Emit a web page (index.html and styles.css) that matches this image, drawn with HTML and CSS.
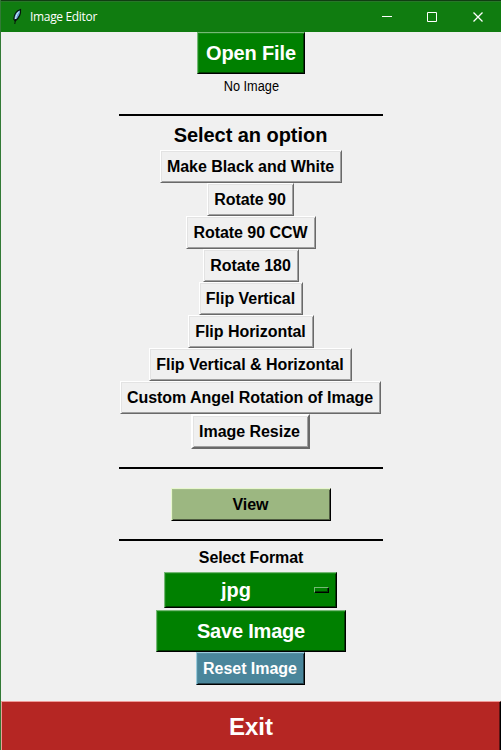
FILE: index.html
```html
<!DOCTYPE html>
<html lang="en">
<head>
<meta charset="utf-8">
<title>Image Editor</title>
<link rel="stylesheet" href="styles.css">
</head>
<body>
<div class="window">
  <header class="titlebar">
    <svg class="feather" width="10" height="18" viewBox="0 0 10 18"><path d="M8.500 1.500C5 2.500 2.200 6 1.800 11L3.200 13C6.400 10.500 9 6 8.500 1.500Z" fill="#67a5d6" stroke="#07140b" stroke-width="1.200"/><path d="M7 3.500C5 5.500 3.900 8 3.500 11" fill="none" stroke="#dcecf6"/><path d="M3.500 11L2.800 16" stroke="#07140b"/></svg>
    <span class="title">Image Editor</span>
    <svg class="controls" width="102" height="12" viewBox="0 0 102 12" fill="none" stroke="#fff"><path d="M0 5.500H10M45.500 1.500H54.500V10.500H45.500Z"/><path d="M91.500 1.500L100.500 10.500M100.500 1.500L91.500 10.500" stroke-width="1.300"/></svg>
  </header>
  <main class="content">
    <button class="btn green open">Open File</button>
    <p class="status">No Image</p>
    <hr class="rule rule-top">
    <h1 class="heading">Select an option</h1>
    <div class="options">
      <button class="btn w-bw">Make Black and White</button>
      <button class="btn odd w-r90">Rotate 90</button>
      <button class="btn w-ccw">Rotate 90 CCW</button>
      <button class="btn w-r180">Rotate 180</button>
      <button class="btn w-fv">Flip Vertical</button>
      <button class="btn w-fh">Flip Horizontal</button>
      <button class="btn odd w-fvh">Flip Vertical &amp; Horizontal</button>
      <button class="btn odd w-angle">Custom Angel Rotation of Image</button>
      <button class="btn odd resize">Image Resize</button>
    </div>
    <hr class="rule rule-mid">
    <button class="btn view">View</button>
    <hr class="rule rule-low">
    <h2 class="subheading">Select Format</h2>
    <button class="btn odd green format"><span class="format-name">jpg</span><span class="indicator"></span></button>
    <button class="btn green save">Save Image</button>
    <button class="btn odd reset">Reset Image</button>
  </main>
  <button class="btn exit">Exit</button>
</div>
</body>
</html>
```
FILE: styles.css
```css
* { box-sizing: border-box; }
body { margin: 0; background: #f0f0f0; font-family: "Liberation Sans", Arial, sans-serif; }
.window { width: 501px; height: 750px; display: flex; flex-direction: column; border-left: 1px solid #327a35; overflow: hidden; }
.titlebar { height: 32px; flex: none; display: flex; align-items: center; background: #107c10; border-top: 1px solid #103e12; box-shadow: inset 0 1px #287629; color: #fff; padding: 0 17px 0 11px; }
.title { font: 12px/16px "Open Sans", "Noto Sans", sans-serif; margin-left: 8px; letter-spacing: -.33px; }
.controls { margin-left: auto; }
.content { display: flex; flex-direction: column; align-items: center; height: 669px; flex: none; }
.btn { display: flex; align-items: center; justify-content: center; flex: none; height: 33px; padding: 0 1px 0 0; background: #f0f0f0; color: #000; border: 1px solid; border-color: #fff #696969 #696969 #fff; box-shadow: inset 1px 1px #e3e3e3, inset -1px -1px #a0a0a0; font: bold 16px/18px "Liberation Sans", Arial, sans-serif; letter-spacing: -.04px; white-space: nowrap; }
.btn.odd { margin-right: 1px; }
.btn.green { background: #008000; color: #fff; border-color: #75b975 #000 #000 #75b975; box-shadow: inset 1px 1px #168916, inset -1px -1px #004000; font-size: 20px; }
.btn.open { width: 108px; height: 42px; letter-spacing: -.15px; padding: 0; }
.status { margin: 3px 0 0; font-size: 14px; line-height: 18px; transform: scaleX(.91); }
.rule { width: 264px; height: 2px; border: 0; background: #000; flex: none; margin: 0; }
.rule-top { margin-top: 19px; }
.heading { margin: 8px 1px 3px 0; font-size: 20px; line-height: 23px; letter-spacing: -.05px; }
.options { display: flex; flex-direction: column; align-items: center; }
.w-bw { width: 182px; }
.w-r90 { width: 87px; }
.w-ccw { width: 130px; }
.w-r180 { width: 96px; }
.w-fv { width: 104px; }
.w-fh { width: 126px; }
.w-fvh { width: 203px; }
.w-angle { width: 261px; }
.btn.resize { width: 119px; height: 35px; border-width: 2px; padding-right: 2px; }
.rule-mid { margin-top: 18px; }
.btn.view { width: 160px; margin-top: 19px; padding-right: 1px; background: #9cb781; border-color: #e8f7cf #000 #000 #e8f7cf; box-shadow: inset 1px 1px #a4bd8b, inset -1px -1px #4e5b40; }
.rule-low { margin-top: 18px; }
.subheading { margin: 8px 0 5px; font-size: 16px; line-height: 18px; letter-spacing: -.12px; }
.btn.format { width: 173px; height: 36px; }
.format-name { margin-left: 56px; }
.indicator { width: 15px; height: 6px; margin: 0 6px 0 auto; border: 1px solid; border-color: #75b975 #000 #000 #75b975; box-shadow: inset -1px -1px #004000; }
.btn.save { width: 190px; height: 42px; margin-top: 2px; padding: 0; letter-spacing: -.2px; }
.btn.reset { width: 109px; background: #4a869b; color: #fff; border-color: #9bcbdc #000 #000 #9bcbdc; box-shadow: inset 1px 1px #568fa2, inset -1px -1px #25434e; }
.btn.exit { width: 500px; height: 50px; padding: 1px 0 0; background: #b52623; color: #fff; border-color: #ef9a98 #000 #b52623 #ef9a98; box-shadow: inset -1px 0 #5b1312; font-size: 24px; }
```
